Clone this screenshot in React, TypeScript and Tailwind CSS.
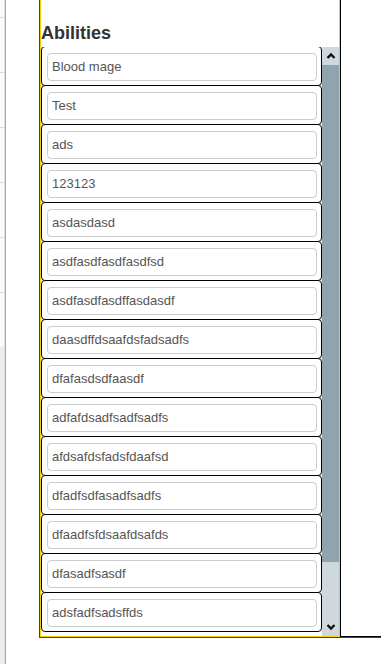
import React from "react";

const items = [
  "Blood mage",
  "Test",
  "ads",
  "123123",
  "asdasdasd",
  "asdfasdfasdfasdfsd",
  "asdfasdfasdffasdasdf",
  "daasdffdsaafdsfadsadfs",
  "dfafasdsdfaasdf",
  "adfafdsadfsadfsadfs",
  "afdsafdsfadsfdaafsd",
  "dfadfsdfasadfsadfs",
  "dfaadfsfdsaafdsafds",
  "dfasadfsasdf",
  "adsfadfsadsffds",
];

function LeftStrip() {
  const lines = [17, 72, 127, 182, 237, 292];
  return (
    <div className="flex h-[664px] w-[6px] shrink-0">
      <div className="relative h-full w-[4px] bg-[#fbfbfb]">
        {lines.map((y) => (
          <div key={y} className="absolute left-0 h-px w-[4px] bg-[#dcdcdc]" style={{ top: y }} />
        ))}
        <div className="absolute left-0 top-[347px] bottom-0 w-[4px] bg-[#ececec]" />
      </div>
      <div className="h-full w-px bg-[#dedede]" />
      <div className="h-full w-px bg-[#a8a8a8]" />
    </div>
  );
}

function Scrollbar() {
  return (
    <div className="flex h-full w-[17px] shrink-0 flex-col bg-[#cfd8dc]">
      <div className="flex h-[18px] items-center justify-center">
        <svg width="10" height="8" viewBox="0 0 10 8">
          <path d="M1.5 6 L5 2.5 L8.5 6" stroke="#111" strokeWidth="2.4" fill="none" />
        </svg>
      </div>
      <div className="h-[497px] bg-[#90a4ae]" />
      <div className="flex-1" />
      <div className="flex h-[18px] items-center justify-center">
        <svg width="10" height="8" viewBox="0 0 10 8">
          <path d="M1.5 2 L5 5.5 L8.5 2" stroke="#111" strokeWidth="2.4" fill="none" />
        </svg>
      </div>
    </div>
  );
}

export default function App() {
  return (
    <div
      className="flex h-[664px] w-[381px] overflow-hidden bg-white"
      style={{ fontFamily: '"Liberation Sans", Arial, sans-serif' }}
    >
      <LeftStrip />
      <div className="w-[33px] shrink-0" />
      <div className="flex h-[638px] flex-1 border-b border-l border-[#e00000]">
        <div className="flex h-[637px] w-[300px] shrink-0 flex-col border-x border-b border-[#f2d000]">
          <div className="h-[47px] shrink-0 pt-[23px]">
            <div className="text-[18px] font-bold leading-[20px] text-[#333]">Abilities</div>
          </div>
          <div className="flex h-[589px] shrink-0">
            <div className="h-full w-[281px] shrink-0 overflow-hidden">
              <div className="-mt-px flex flex-col">
                {items.map((t, i) => (
                  <div
                    key={i}
                    className={`rounded-[4px] border border-black bg-white pb-[4px] pl-[5px] pr-[4px] pt-[6px] ${
                      i > 0 ? "-mt-px" : ""
                    }`}
                  >
                    <div className="flex h-[28px] items-center rounded-[4px] border border-[#cccccc] bg-white pl-[4px] text-[13px] text-[#555]">
                      {t}
                    </div>
                  </div>
                ))}
              </div>
            </div>
            <Scrollbar />
          </div>
        </div>
        <div className="h-[637px] flex-1 border-b border-l border-black" />
      </div>
    </div>
  );
}
